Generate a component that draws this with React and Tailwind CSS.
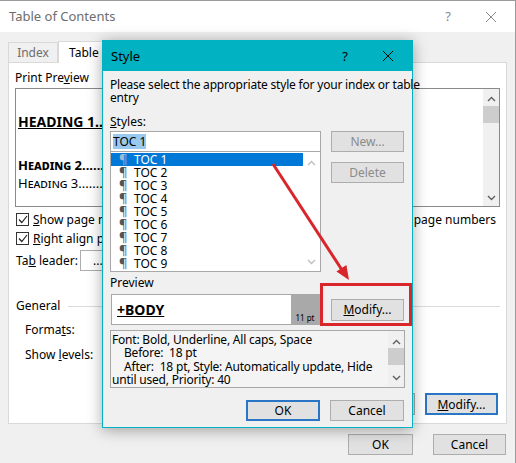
const ui = "font-['Segoe_UI','Noto_Sans','Liberation_Sans',sans-serif]"

function CloseX({ className = 'text-black' }) {
  return (
    <svg width="12" height="12" viewBox="0 0 12 12" className={className}>
      <path d="M1 1L11 11M11 1L1 11" stroke="currentColor" strokeWidth="1" fill="none" />
    </svg>
  )
}

function Chevron({ up }) {
  return (
    <svg width="9" height="6" viewBox="0 0 9 6" className="text-[#606060]">
      <path d={up ? 'M1 5L4.5 1.5L8 5' : 'M1 1L4.5 4.5L8 1'} stroke="currentColor" strokeWidth="1.4" fill="none" />
    </svg>
  )
}

function Check() {
  return (
    <span className="flex h-[13px] w-[13px] shrink-0 items-center justify-center border border-[#333] bg-white">
      <svg width="10" height="9" viewBox="0 0 10 9">
        <path d="M1 4.5L3.8 7.5L9 1" stroke="#222" strokeWidth="1.2" fill="none" />
      </svg>
    </span>
  )
}

function Button({ children, w = 'w-[73px]', h = 'h-[21px]', focused, disabled }) {
  return (
    <div
      className={`flex ${w} ${h} shrink-0 items-center justify-center whitespace-nowrap bg-[#e1e1e1] text-[12px] ${
        focused ? 'border-2 border-[#2a76c6]' : 'border border-[#adadad]'
      } ${disabled ? 'text-[#8b8b8b]' : 'text-black'}`}
    >
      {children}
    </div>
  )
}

function TableOfContents() {
  return (
    <div className="flex h-full flex-col">
      <div className="flex h-[31px] shrink-0 items-center justify-between bg-white pl-[9px] pr-[18px]">
        <span className="text-[13px] text-[#6d6d6d]">Table of Contents</span>
        <div className="flex items-center gap-[34px] text-[#8a8a8a]">
          <span className="text-[13px]">?</span>
          <CloseX className="text-[#8a8a8a]" />
        </div>
      </div>

      <div className="px-[8px] pt-[9px]">
        <div className="flex h-[21px] items-end">
          <div className="flex h-[20px] w-[50px] items-center justify-center border border-b-0 border-[#d9d9d9] bg-[#f0f0f0] text-[#6d6d6d]">
            Index
          </div>
          <div className="relative -mb-px flex h-[22px] w-[110px] items-center overflow-hidden whitespace-nowrap border border-b-0 border-[#d9d9d9] bg-white pl-[10px]">
            Table of Contents
          </div>
        </div>

        <div className="flex h-[362px] w-[499px] flex-col border border-[#d9d9d9] bg-white pl-[6px]">
          <div className="pt-[7px]">
            Print Pre<span className="underline">v</span>iew
          </div>
          <div className="mt-[3px] flex h-[119px] w-[485px] border border-[#8a8a8a]">
            <div className="flex-1 overflow-hidden whitespace-nowrap pl-[2px] pt-[24px]">
              <div className="text-[14px] font-bold uppercase leading-[18px] underline">Heading 1.......................</div>
              <div className="mt-[26px] text-[13px] font-bold leading-[17px] [font-variant:small-caps]">Heading 2.........................</div>
              <div className="mt-[1px] text-[13px] leading-[17px] [font-variant:small-caps]">Heading 3...........................</div>
            </div>
            <div className="flex w-[16px] flex-col items-center bg-[#f0f0f0] pt-[7px]">
              <Chevron up />
              <div className="mt-[4px] h-[17px] w-[16px] bg-[#cdcdcd]" />
              <div className="mt-auto pb-[5px]">
                <Chevron />
              </div>
            </div>
          </div>

          <div className="mt-[3px] flex h-[19px] items-center whitespace-nowrap pl-[1px] pr-[10px]">
            <Check />
            <span className="ml-[4px]">
              <span className="underline">S</span>how page numbers
            </span>
            <span className="ml-auto flex items-center gap-[4px]">
              <Check />
              <span>Use hyperlinks instead of page numbers</span>
            </span>
          </div>
          <div className="flex h-[19px] items-center whitespace-nowrap pl-[1px]">
            <Check />
            <span className="ml-[4px]">
              <span className="underline">R</span>ight align page numbers
            </span>
          </div>
          <div className="mt-[2px] flex items-center whitespace-nowrap">
            <span className="w-[65px] pl-[1px]">
              Ta<span className="underline">b</span> leader:
            </span>
            <div className="flex h-[21px] w-[130px] items-center border border-[#adadad] pl-[12px]">.............</div>
          </div>

          <div className="mt-[27px] flex items-center pl-[1px] leading-[16px]">
            <span>General</span>
            <div className="ml-[8px] mr-[6px] h-px flex-1 bg-[#dcdcdc]" />
          </div>
          <div className="mt-[8px] pl-[10px]">
            Forma<span className="underline">t</span>s:
          </div>
          <div className="mt-[10px] pl-[10px]">
            Show <span className="underline">l</span>evels:
          </div>

          <div className="mt-auto flex justify-end gap-[10px] pb-[8px] pr-[8px]">
            <Button w="w-[72px]" h="h-[22px]">Options...</Button>
            <Button w="w-[73px]" h="h-[22px]" focused>
              <span className="underline">M</span>odify...
            </Button>
          </div>
        </div>
      </div>

      <div className="flex justify-end gap-[20px] pr-[9px] pt-[10px]">
        <Button w="w-[65px]">OK</Button>
        <Button w="w-[73px]">Cancel</Button>
      </div>
    </div>
  )
}

const styles = ['TOC 1', 'TOC 2', 'TOC 3', 'TOC 4', 'TOC 5', 'TOC 6', 'TOC 7', 'TOC 8', 'TOC 9']

function StyleDialog() {
  return (
    <div className="absolute left-[102px] top-[39px] flex h-[388px] w-[311px] flex-col border border-[#00b2c2] bg-[#f0f0f0] shadow-[0_2px_14px_rgba(0,0,0,0.35)]">
      <div className="flex h-[30px] shrink-0 items-center justify-between bg-[#00b2c2] pl-[8px] pr-[18px]">
        <span className="text-[13px]">Style</span>
        <div className="flex items-center gap-[34px]">
          <span className="text-[13px]">?</span>
          <CloseX />
        </div>
      </div>

      <div className="flex flex-col px-[7px]">
        <div className="whitespace-nowrap pt-[7px] leading-[13px] tracking-[-0.2px]">
          Please select the appropriate style for your index or table
          <br />
          entry
        </div>
        <div className="mt-[10px]">
          <span className="underline">S</span>tyles:
        </div>

        <div className="mt-[2px] flex">
          <div className="w-[211px]">
            <div className="flex h-[21px] items-center border border-[#a8a8a8] bg-white pl-[2px]">
              <span className="bg-[#99c9ef] leading-[15px]">TOC 1</span>
            </div>
            <div className="flex h-[120px] border border-t-0 border-[#a8a8a8] bg-white">
              <div className="flex-1 pt-[1px]">
                {styles.map((s, i) => (
                  <div
                    key={s}
                    className={`flex h-[13px] items-center leading-[13px] ${i === 0 ? 'bg-[#0078d7] text-white' : ''}`}
                  >
                    <span className={`w-[23px] pl-[8px] text-[13px] ${i === 0 ? 'text-[#9cb9d8]' : 'text-[#555]'}`}>¶</span>
                    <span>{s}</span>
                  </div>
                ))}
              </div>
              <div className="flex w-[17px] flex-col items-center pb-[6px] pt-[8px]">
                <span className="flex opacity-40">
                  <Chevron up />
                </span>
                <span className="mt-auto flex opacity-40">
                  <Chevron />
                </span>
              </div>
            </div>
          </div>
          <div className="ml-[10px] flex flex-col gap-[10px]">
            <Button w="w-[73px]" disabled>New...</Button>
            <Button w="w-[73px]" disabled>Delete</Button>
          </div>
        </div>

        <div className="mt-[3px]">Preview</div>
        <div className="mt-[4px] flex items-center">
          <div className="ml-px flex h-[31px] w-[209px] border border-[#a8a8a8] bg-white">
            <div className="flex flex-1 items-center pl-[5px] text-[14px] font-bold underline">+BODY</div>
            <div className="flex w-[28px] items-end justify-center whitespace-nowrap bg-[#a9a9a9] pb-px text-[8px] leading-[10px]">11 pt</div>
          </div>
          <div className="ml-[11px]">
            <Button w="w-[73px]" h="h-[22px]">
              <span className="underline">M</span>odify...
            </Button>
          </div>
        </div>

        <div className="mt-[5px] flex h-[58px] w-[295px] border border-[#a8a8a8] bg-[#f4f4f4]">
          <div className="flex-1 overflow-hidden whitespace-nowrap pl-[1px] pt-[2px] leading-[13.3px] tracking-[-0.2px]">
            <div>Font: Bold, Underline, All caps, Space</div>
            <div className="pl-[12px]">Before:&nbsp; 18 pt</div>
            <div className="pl-[12px]">After:&nbsp; 18 pt, Style: Automatically update, Hide</div>
            <div>until used, Priority: 40</div>
          </div>
          <div className="flex w-[16px] flex-col items-center bg-[#f0f0f0] pb-[6px] pt-[8px]">
            <Chevron up />
            <div className="mt-[3px] h-[17px] w-[16px] bg-[#cdcdcd]" />
            <div className="mt-auto flex">
              <Chevron />
            </div>
          </div>
        </div>

        <div className="mt-[12px] flex justify-end gap-[10px] pr-px">
          <Button w="w-[74px]" focused>OK</Button>
          <Button w="w-[74px]">Cancel</Button>
        </div>
      </div>
    </div>
  )
}

export default function App() {
  return (
    <div className={`relative h-[463px] w-[516px] overflow-hidden border-r border-t border-[#9a9a9a] bg-[#f0f0f0] text-[12px] leading-[15px] text-black ${ui}`}>
      <TableOfContents />
      <StyleDialog />
      <div className="absolute left-[320px] top-[282px] h-[43px] w-[92px] border-[3px] border-[#d9262b]" />
      <svg className="pointer-events-none absolute left-0 top-0" width="516" height="463" viewBox="0 0 516 463">
        <line x1="273" y1="163" x2="342" y2="269" stroke="#d9262b" strokeWidth="3" />
        <polygon points="349,279 336.4,270.6 346.4,264" fill="#d9262b" />
      </svg>
    </div>
  )
}
